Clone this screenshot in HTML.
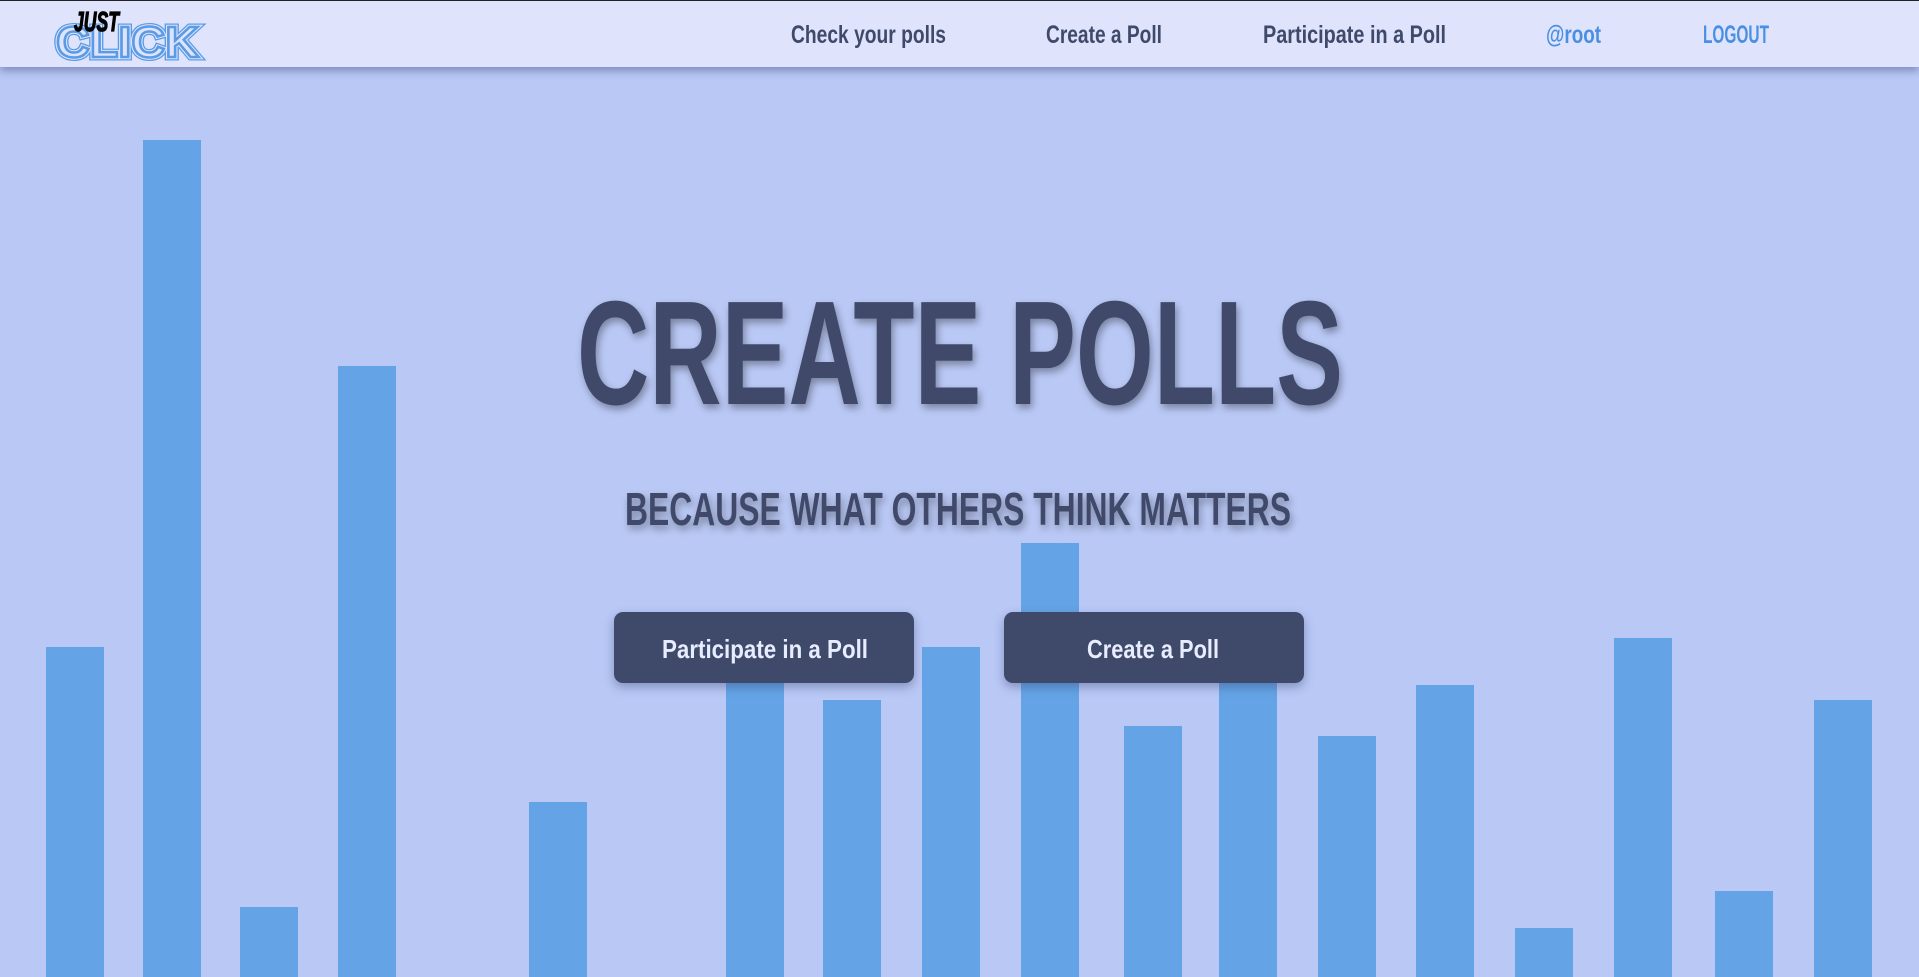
<!DOCTYPE html>
<html><head><meta charset="utf-8"><style>
html,body{margin:0;padding:0;width:1919px;height:977px;overflow:hidden;background:#b9c8f5;font-family:"Liberation Sans Narrow","Liberation Sans",sans-serif}
.bar{position:absolute;bottom:0;width:58px;background:#64a4e6}
.nav{position:absolute;left:0;top:0;width:1919px;height:67px;background:#dfe4fc;border-top:1px solid #222;box-sizing:border-box;box-shadow:0 4px 8px rgba(60,70,120,.45);z-index:5}
.btn{position:absolute;top:612px;height:71px;width:300px;background:#3f4a6b;border-radius:9px;box-shadow:0 4px 10px rgba(50,60,110,.4)}
svg{position:absolute;left:0;top:0}
</style></head><body>
<div class="bar" style="left:46px;top:647px"></div>
<div class="bar" style="left:143px;top:140px"></div>
<div class="bar" style="left:240px;top:907px"></div>
<div class="bar" style="left:338px;top:366px"></div>
<div class="bar" style="left:529px;top:802px"></div>
<div class="bar" style="left:726px;top:661px"></div>
<div class="bar" style="left:823px;top:700px"></div>
<div class="bar" style="left:922px;top:647px"></div>
<div class="bar" style="left:1021px;top:543px"></div>
<div class="bar" style="left:1124px;top:726px"></div>
<div class="bar" style="left:1219px;top:661px"></div>
<div class="bar" style="left:1318px;top:736px"></div>
<div class="bar" style="left:1416px;top:685px"></div>
<div class="bar" style="left:1515px;top:928px"></div>
<div class="bar" style="left:1614px;top:638px"></div>
<div class="bar" style="left:1715px;top:891px"></div>
<div class="bar" style="left:1814px;top:700px"></div>

<div class="nav"></div>
<div class="btn" style="left:614px"></div>
<div class="btn" style="left:1004px"></div>

<svg width="1919" height="977" style="z-index:6">
<defs><filter id="sh" x="-10%" y="-20%" width="120%" height="150%"><feGaussianBlur in="SourceAlpha" stdDeviation="4"/><feOffset dx="2" dy="4"/><feComponentTransfer><feFuncA type="linear" slope="0.35"/></feComponentTransfer><feMerge><feMergeNode/><feMergeNode in="SourceGraphic"/></feMerge></filter></defs>
<g font-family="Liberation Sans Narrow, Liberation Sans, sans-serif" font-weight="bold">
<g font-size="44">
<text x="56" y="57" textLength="143" lengthAdjust="spacingAndGlyphs" fill="none" stroke="#5a9be6" stroke-width="7">CLICK</text>
<text x="56" y="57" textLength="143" lengthAdjust="spacingAndGlyphs" fill="none" stroke="#dfe4fc" stroke-width="4.5">CLICK</text>
<text x="56" y="57" textLength="143" lengthAdjust="spacingAndGlyphs" fill="#dfe4fc" stroke="#5a9be6" stroke-width="2.5">CLICK</text>
</g>
<text x="74" y="31" font-size="28" font-style="italic" textLength="45" lengthAdjust="spacingAndGlyphs" fill="#000" stroke="#000" stroke-width="1.2">JUST</text>
<g font-size="25" fill="#3f4a6b">
<text x="791" y="43" textLength="155" lengthAdjust="spacingAndGlyphs">Check your polls</text>
<text x="1046" y="43" textLength="116" lengthAdjust="spacingAndGlyphs">Create a Poll</text>
<text x="1263" y="43" textLength="183" lengthAdjust="spacingAndGlyphs">Participate in a Poll</text>
<text x="1546" y="43" textLength="55" lengthAdjust="spacingAndGlyphs" fill="#4a90e2">@root</text>
<text x="1703" y="43" textLength="66" lengthAdjust="spacingAndGlyphs" fill="#4a90e2">LOGOUT</text>
</g>
<g filter="url(#sh)" fill="#3f4a6b">
<text x="577" y="404" font-size="148" textLength="766" lengthAdjust="spacingAndGlyphs">CREATE POLLS</text>
<text x="625" y="525" font-size="46" textLength="666" lengthAdjust="spacingAndGlyphs">BECAUSE WHAT OTHERS THINK MATTERS</text>
</g>
<g font-size="26" fill="#e8ecff">
<text x="662" y="658" textLength="206" lengthAdjust="spacingAndGlyphs">Participate in a Poll</text>
<text x="1087" y="658" textLength="132" lengthAdjust="spacingAndGlyphs">Create a Poll</text>
</g>
</g>
</svg>
</body></html>
